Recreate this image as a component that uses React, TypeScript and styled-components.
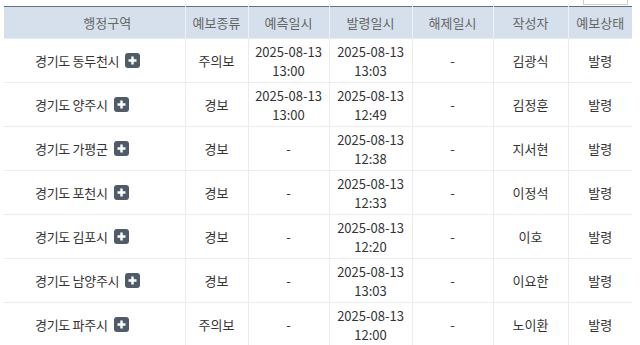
import React from 'react';
import styled, {createGlobalStyle} from "styled-components";

const GlobalStyle = createGlobalStyle`
	html, body {
		margin: 0;
		padding: 0;
		background: #fff;
		font-family: "Noto Sans CJK KR", "Noto Sans", sans-serif;
	}
`

type Row = {
	area: string
	kind: string
	forecast: string[]
	issued: string[]
	released: string
	writer: string
	status: string
}

const rows: Row[] = [
	{area: '경기도 동두천시', kind: '주의보', forecast: ['2025-08-13', '13:00'], issued: ['2025-08-13', '13:03'], released: '-', writer: '김광식', status: '발령'},
	{area: '경기도 양주시', kind: '경보', forecast: ['2025-08-13', '13:00'], issued: ['2025-08-13', '12:49'], released: '-', writer: '김정훈', status: '발령'},
	{area: '경기도 가평군', kind: '경보', forecast: ['-'], issued: ['2025-08-13', '12:38'], released: '-', writer: '지서현', status: '발령'},
	{area: '경기도 포천시', kind: '경보', forecast: ['-'], issued: ['2025-08-13', '12:33'], released: '-', writer: '이정석', status: '발령'},
	{area: '경기도 김포시', kind: '경보', forecast: ['-'], issued: ['2025-08-13', '12:20'], released: '-', writer: '이호', status: '발령'},
	{area: '경기도 남양주시', kind: '경보', forecast: ['-'], issued: ['2025-08-13', '13:03'], released: '-', writer: '이요한', status: '발령'},
	{area: '경기도 파주시', kind: '주의보', forecast: ['-'], issued: ['2025-08-13', '12:00'], released: '-', writer: '노이환', status: '발령'},
]

const columns = [
	{title: '행정구역', width: 181},
	{title: '예보종류', width: 63},
	{title: '예측일시', width: 81},
	{title: '발령일시', width: 83},
	{title: '해제일시', width: 81},
	{title: '작성자', width: 75},
	{title: '예보상태', width: 64},
]

const PlusIcon = () => (
	<StyledPlus>
		<svg width="15" height="15" viewBox="0 0 15 15">
			<rect x="0" y="0" width="15" height="15" rx="3" fill="#4f5b68"/>
			<path d="M7.5 3.5v8M3.5 7.5h8" stroke="#fff" strokeWidth="2.4" strokeLinecap="butt"/>
		</svg>
	</StyledPlus>
)

const Lines = ({lines}: {lines: string[]}) => (
	<>
		{lines.map((l, i) => <StyledLine key={i}>{l}</StyledLine>)}
	</>
)

export default function App() {
	return (
		<StyledPage>
			<GlobalStyle/>
			<StyledToolbar>
				<StyledPager/>
			</StyledToolbar>
			<StyledTable>
				<colgroup>
					{columns.map(c => <col key={c.title} style={{width: c.width}}/>)}
				</colgroup>
				<thead>
					<tr>
						{columns.map(c => <StyledTh key={c.title}>{c.title}</StyledTh>)}
					</tr>
				</thead>
				<tbody>
					{rows.map(r => (
						<tr key={r.area}>
							<StyledAreaTd>
								<StyledArea>
									<span>{r.area}</span>
									<PlusIcon/>
								</StyledArea>
							</StyledAreaTd>
							<StyledTd>{r.kind}</StyledTd>
							<StyledTd><Lines lines={r.forecast}/></StyledTd>
							<StyledTd><Lines lines={r.issued}/></StyledTd>
							<StyledTd>{r.released}</StyledTd>
							<StyledTd>{r.writer}</StyledTd>
							<StyledTd>{r.status}</StyledTd>
						</tr>
					))}
				</tbody>
			</StyledTable>
		</StyledPage>
	)
}

const StyledPage = styled.div`
	padding: 0 0 0 4px;
	width: 628px;
`

const StyledToolbar = styled.div`
	display: flex;
	justify-content: flex-end;
	height: 6px;
	overflow: hidden;
	padding-right: 4px;
`

const StyledPager = styled.div`
	width: 43px;
	height: 20px;
	margin-top: -17px;
	border: 1px solid #cfcfcf;
	background: #fff;
`

const StyledTable = styled.table`
	width: 628px;
	table-layout: fixed;
	border-collapse: collapse;
	border-top: 1px solid #5e7186;
	font-size: 13px;
	color: #333;
`

const StyledTh = styled.th`
	height: 31px;
	padding: 0;
	background: #d5e0ec;
	color: #666;
	font-weight: normal;
	text-align: center;
	border-left: 1px solid #eef2f7;
	border-bottom: 1px solid #e3eaf2;
	&:first-child {
		border-left: none;
		padding-left: 26px;
	}
`

const StyledTd = styled.td`
	height: 43px;
	padding: 0;
	text-align: center;
	vertical-align: middle;
	border-left: 1px solid #ececec;
	border-bottom: 1px solid #ececec;
`

const StyledAreaTd = styled(StyledTd)`
	border-left: none;
	padding-left: 31px;
	text-align: left;
`

const StyledArea = styled.div`
	display: flex;
	align-items: center;
	gap: 6px;
	letter-spacing: -0.3px;
`

const StyledPlus = styled.span`
	display: inline-flex;
	width: 15px;
	height: 15px;
`

const StyledLine = styled.div`
	line-height: 19px;
`
